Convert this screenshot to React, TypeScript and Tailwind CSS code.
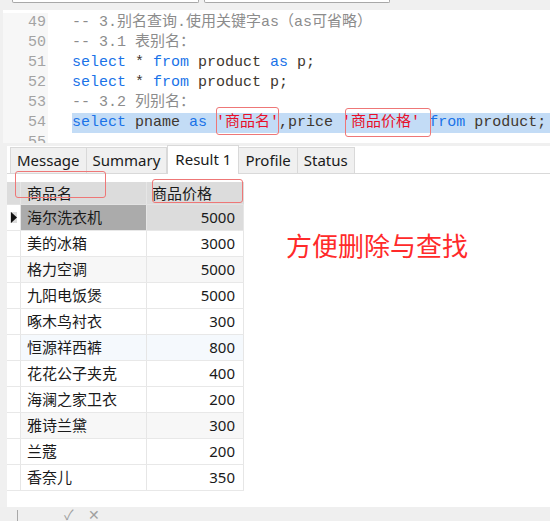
const mono = { fontFamily: '"Liberation Mono", "Noto Sans CJK SC", monospace' };

const rows = [
  ["海尔洗衣机", "5000"],
  ["美的冰箱", "3000"],
  ["格力空调", "5000"],
  ["九阳电饭煲", "5000"],
  ["啄木鸟衬衣", "300"],
  ["恒源祥西裤", "800"],
  ["花花公子夹克", "400"],
  ["海澜之家卫衣", "200"],
  ["雅诗兰黛", "300"],
  ["兰蔻", "200"],
  ["香奈儿", "350"],
];

function Kw({ children }: { children: React.ReactNode }) {
  return <span className="text-[#1a73e8]">{children}</span>;
}

function Str({ children }: { children: React.ReactNode }) {
  return <span className="text-[#e8102a]">{children}</span>;
}

function CodeLine({ num, children, selected }: { num: number; children?: React.ReactNode; selected?: boolean }) {
  return (
    <div className="flex h-[20px] items-center">
      <div className="w-[45px] shrink-0 self-stretch bg-[#f7f7f7] pr-[2px] text-right leading-[20px] text-[#a3a3a3]">{num}</div>
      <div className="w-[24px] shrink-0" />
      <div className={"flex-1 whitespace-pre leading-[20px] text-[#40372f] " + (selected ? "bg-[#c3dcf6]" : "")}>{children}</div>
    </div>
  );
}

function Tab({ label, active }: { label: string; active?: boolean }) {
  if (active) {
    return (
      <div className="-mb-px flex h-[29px] w-[72px] items-start justify-center border border-b-0 border-[#d9d9d9] bg-white pt-[2px] text-[15px] text-[#1a1a1a]">
        {label}
      </div>
    );
  }
  return (
    <div className="flex h-[26px] items-center justify-center border border-l-0 border-b-0 border-[#d9d9d9] bg-[#f0f0f0] px-[6px] text-[15px] text-[#1a1a1a] first:border-l">
      {label}
    </div>
  );
}

export default function App() {
  return (
    <div
      className="relative h-[521px] w-[550px] overflow-hidden bg-[#f0f0f0]"
      style={{ fontFamily: '"Noto Sans", "Noto Sans CJK SC", sans-serif' }}
    >
      {/* top toolbar: bottoms of two inputs */}
      <div className="flex h-[10px] gap-[5px] pl-[12px]">
        <div className="h-[3px] w-[187px] rounded-b-[2px] border border-t-0 border-[#a8a8a8] bg-white" />
        <div className="h-[3px] w-[186px] rounded-b-[2px] border border-t-0 border-[#a8a8a8] bg-white" />
      </div>

      {/* editor */}
      <div className="ml-[3px] h-[133px] overflow-hidden bg-white pt-[3px] text-[15px]" style={mono}>
        <CodeLine num={49}>
          <span className="text-[#8c8c8c]">-- 3.别名查询.使用关键字as（as可省略）</span>
        </CodeLine>
        <CodeLine num={50}>
          <span className="text-[#8c8c8c]">-- 3.1 表别名：</span>
        </CodeLine>
        <CodeLine num={51}>
          <Kw>select</Kw> * <Kw>from</Kw> product <Kw>as</Kw> p;
        </CodeLine>
        <CodeLine num={52}>
          <Kw>select</Kw> * <Kw>from</Kw> product p;
        </CodeLine>
        <CodeLine num={53}>
          <span className="text-[#8c8c8c]">-- 3.2 列别名：</span>
        </CodeLine>
        <CodeLine num={54} selected>
          <Kw>select</Kw> pname <Kw>as</Kw> <Str>'商品名'</Str>,price <Str>'商品价格'</Str> <Kw>from</Kw> product;
        </CodeLine>
        <CodeLine num={55} />
      </div>

      {/* results panel */}
      <div className="mt-[3px] flex h-[361px]">
        <div className="w-[7px] shrink-0 bg-[#f0f0f0]" />
        <div className="flex flex-1 flex-col bg-white">
          <div className="flex h-[28px] items-end border-b border-[#d9d9d9] pl-[3px]">
            <Tab label="Message" />
            <Tab label="Summary" />
            <Tab label="Result 1" active />
            <Tab label="Profile" />
            <Tab label="Status" />
          </div>

          <div className="mt-[8px] w-[237px] text-[15px] text-[#1a1a1a]">
            <div className="flex h-[23px] border-b border-[#e3e3e3] bg-[#dcdcdc]">
              <div className="w-[14px] shrink-0 border-r border-[#e6e6e6]" />
              <div className="flex w-[126px] items-center border-r border-[#e6e6e6] pl-[6px]">商品名</div>
              <div className="flex flex-1 items-center pl-[5px]">商品价格</div>
            </div>
            {rows.map(([name, price], i) => {
              const sel = i === 0;
              const bg = i === 2 || i === 8 ? "bg-[#f7f7f7]" : i === 5 ? "bg-[#f5f9fd]" : "bg-white";
              return (
                <div key={name} className={"flex h-[26px] border-b border-[#e8e8e8] " + (sel ? "bg-[#dcdcdc]" : bg)}>
                  <div className="flex w-[14px] shrink-0 items-center justify-center border-r border-[#e6e6e6] bg-white">
                    {sel && (
                      <svg width="7" height="11" viewBox="0 0 7 11" className="bg-[#dcdcdc]">
                        <path d="M1 0 L7 5.5 L1 11 Z" fill="#111" />
                      </svg>
                    )}
                  </div>
                  <div className={"flex w-[126px] items-center border-r border-[#e6e6e6] pl-[6px] " + (sel ? "bg-[#ababab]" : "")}>
                    {name}
                  </div>
                  <div className="flex flex-1 items-center justify-end border-r border-[#e6e6e6] pr-[8px]">{price}</div>
                </div>
              );
            })}
          </div>

          <div className="absolute left-[286px] top-[228px] text-[26px] leading-[36px] text-[#ff2a2a]">方便删除与查找</div>
        </div>
      </div>

      {/* bottom status bar */}
      <div className="flex h-[14px] items-start gap-[14px] overflow-hidden bg-[#efefef] pl-[17px] text-[14px] leading-[22px] text-[#a0a0a0]">
        <span className="mt-[3px] h-[12px] w-px bg-[#a8a8a8]" />
        <span className="ml-[32px] -mt-[3px]">✓</span>
        <span className="-mt-[3px]">✕</span>
      </div>

      {/* red annotation frames */}
      <div className="absolute left-[216px] top-[107px] h-[28px] w-[63px] rounded-[3px] border-[1.5px] border-[#ee7777]" />
      <div className="absolute left-[345px] top-[108px] h-[29px] w-[86px] rounded-[3px] border-[1.5px] border-[#ee7777]" />
      <div className="absolute left-[15px] top-[171px] h-[27px] w-[91px] rounded-[3px] border-[1.5px] border-[#ee7777]" />
      <div className="absolute left-[152px] top-[179px] h-[24px] w-[91px] rounded-[3px] border-[1.5px] border-[#ee7777]" />
    </div>
  );
}
